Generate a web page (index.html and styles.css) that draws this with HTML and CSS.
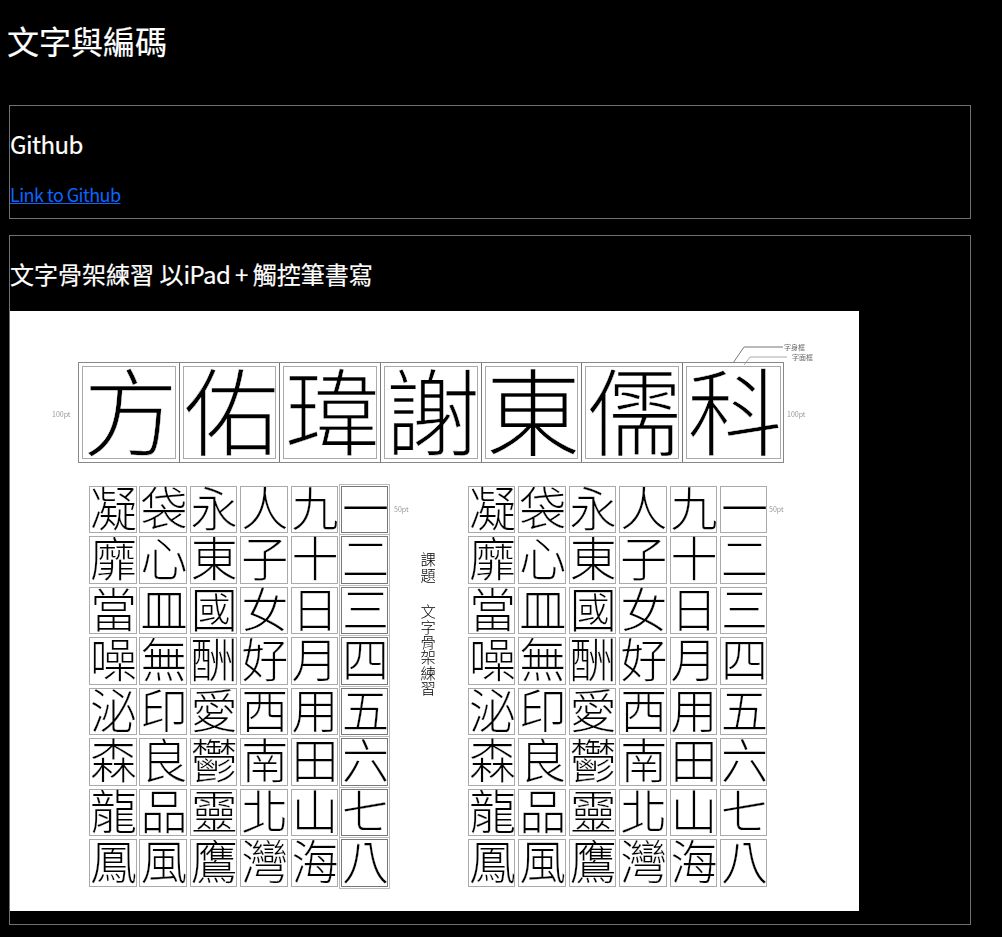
FILE: index.html
```html
<!DOCTYPE html>
<html lang="zh-Hant">
<head>
<meta charset="utf-8">
<title>文字與編碼</title>
<link rel="stylesheet" href="styles.css">
</head>
<body>
<h1 class="title">文字與編碼</h1>
<section class="card card-github">
  <h2 class="card-title"><span class="latin">Github</span></h2>
  <p class="card-text"><a class="link latin" href="#">Link to Github</a></p>
</section>
<section class="card card-sheet">
  <h2 class="card-title">文字骨架練習 以<span class="latin">iPad + </span>觸控筆書寫</h2>
  <div class="sheet">
    <svg class="leaders" width="100" height="30" viewBox="0 0 100 30" aria-hidden="true">
      <path class="leader" d="M0 22 L11 6 H50"/>
      <path class="leader leader-light" d="M11 24 L17 16 H54"/>
    </svg>
    <span class="note note-body">字身框</span>
    <span class="note note-face">字面框</span>
    <span class="size size-a">100pt</span>
    <span class="size size-b">100pt</span>
    <span class="size size-c">50pt</span>
    <span class="size size-d">50pt</span>
    <div class="names">
      <div class="name"><span class="name-inner">方</span></div>
      <div class="name"><span class="name-inner">佑</span></div>
      <div class="name"><span class="name-inner">瑋</span></div>
      <div class="name"><span class="name-inner">謝</span></div>
      <div class="name"><span class="name-inner">東</span></div>
      <div class="name"><span class="name-inner">儒</span></div>
      <div class="name"><span class="name-inner">科</span></div>
    </div>
    <div class="practice">
      <div class="chars chars-left">
        <span class="ch">凝</span><span class="ch">袋</span><span class="ch">永</span><span class="ch">人</span><span class="ch">九</span><span class="ch ch-mark">一</span>
        <span class="ch">靡</span><span class="ch">心</span><span class="ch">東</span><span class="ch">子</span><span class="ch">十</span><span class="ch ch-mark">二</span>
        <span class="ch">當</span><span class="ch">皿</span><span class="ch">國</span><span class="ch">女</span><span class="ch">日</span><span class="ch ch-mark">三</span>
        <span class="ch">噪</span><span class="ch">無</span><span class="ch">酬</span><span class="ch">好</span><span class="ch">月</span><span class="ch ch-mark">四</span>
        <span class="ch">泌</span><span class="ch">印</span><span class="ch">愛</span><span class="ch">西</span><span class="ch">用</span><span class="ch ch-mark">五</span>
        <span class="ch">森</span><span class="ch">良</span><span class="ch">鬱</span><span class="ch">南</span><span class="ch">田</span><span class="ch ch-mark">六</span>
        <span class="ch">龍</span><span class="ch">品</span><span class="ch">靈</span><span class="ch">北</span><span class="ch">山</span><span class="ch ch-mark">七</span>
        <span class="ch">鳳</span><span class="ch">風</span><span class="ch">鷹</span><span class="ch">灣</span><span class="ch">海</span><span class="ch ch-mark">八</span>
      </div>
      <div class="topic"><span>課題</span><span>文字骨架練習</span></div>
      <div class="chars chars-right">
        <span class="ch">凝</span><span class="ch">袋</span><span class="ch">永</span><span class="ch">人</span><span class="ch">九</span><span class="ch">一</span>
        <span class="ch">靡</span><span class="ch">心</span><span class="ch">東</span><span class="ch">子</span><span class="ch">十</span><span class="ch">二</span>
        <span class="ch">當</span><span class="ch">皿</span><span class="ch">國</span><span class="ch">女</span><span class="ch">日</span><span class="ch">三</span>
        <span class="ch">噪</span><span class="ch">無</span><span class="ch">酬</span><span class="ch">好</span><span class="ch">月</span><span class="ch">四</span>
        <span class="ch">泌</span><span class="ch">印</span><span class="ch">愛</span><span class="ch">西</span><span class="ch">用</span><span class="ch">五</span>
        <span class="ch">森</span><span class="ch">良</span><span class="ch">鬱</span><span class="ch">南</span><span class="ch">田</span><span class="ch">六</span>
        <span class="ch">龍</span><span class="ch">品</span><span class="ch">靈</span><span class="ch">北</span><span class="ch">山</span><span class="ch">七</span>
        <span class="ch">鳳</span><span class="ch">風</span><span class="ch">鷹</span><span class="ch">灣</span><span class="ch">海</span><span class="ch">八</span>
      </div>
    </div>
  </div>
</section>
</body>
</html>
```
FILE: styles.css
```css
html { background: #000; }
body {
  margin: 0;
  padding: 0 31px 13px 9px;
  background: #000;
  color: #fff;
  font-family: "Noto Sans CJK TC", "Noto Sans", sans-serif;
}
.title {
  margin: 17px 0 42px -2px;
  font-size: 32px;
  font-weight: 400;
  line-height: 46px;
  -webkit-text-stroke: 0.2px #fff;
}
.card {
  border: 1px solid #707070;
  margin-bottom: 16px;
}
.card-title {
  margin: 20px 0 20px;
  font-size: 24px;
  font-weight: 400;
  line-height: 35px;
  -webkit-text-stroke: 0.2px #fff;
}
.latin { letter-spacing: -0.55px; }
.card-text {
  margin: 0;
  font-size: 18px;
  line-height: 26px;
}
.card-github { height: 112px; }
.card-sheet { height: 688px; margin-bottom: 0; }
.link { color: #0a66ff; }
.sheet {
  position: relative;
  width: 849px;
  height: 600px;
  background: #fff;
  color: #000;
  padding: 51px 0 0 68px;
  box-sizing: border-box;
}
.leaders {
  position: absolute;
  left: 723px;
  top: 30px;
}
.leader { fill: none; stroke: #777; stroke-width: 1; }
.leader-light { stroke: #aaa; }
.note, .size {
  position: absolute;
  font-size: 7px;
  line-height: 8px;
  white-space: nowrap;
  filter: blur(0.3px);
}
.note { color: #666; }
.note-body { left: 774px; top: 32px; }
.note-face { left: 782px; top: 42px; }
.size { color: #999; }
.size-a { left: 42px; top: 99px; }
.size-b { left: 777px; top: 99px; }
.size-c { left: 384px; top: 194px; }
.size-d { left: 759px; top: 194px; }
.names {
  display: grid;
  grid-template-columns: repeat(7, 100.7px);
  width: 706px;
  height: 101px;
  border: 1px solid #888;
  box-sizing: border-box;
  filter: blur(0.3px);
}
.name {
  padding: 3px;
  border-right: 1px solid #777;
  box-sizing: border-box;
  height: 99px;
}
.name:last-child { border-right: 0; }
.name-inner {
  display: block;
  height: 93px;
  border: 1px solid #aaa;
  box-sizing: border-box;
  font-size: 95px;
  line-height: 81px;
  text-align: center;
  font-weight: 300;
  -webkit-text-stroke: 0.4px #fff;
}
.practice {
  display: flex;
  margin: 22.5px 0 0 11px;
}
.chars {
  display: grid;
  grid-template-columns: repeat(6, 47.5px);
  grid-auto-rows: 47.5px;
  column-gap: 2.9px;
  row-gap: 3px;
  filter: blur(0.3px);
}
.ch {
  border: 1px solid #aaa;
  box-sizing: border-box;
  font-size: 47px;
  line-height: 38px;
  text-align: center;
  font-weight: 300;
  -webkit-text-stroke: 0.2px #fff;
}
.ch-mark {
  outline: 1px solid #bbb;
  outline-offset: 1px;
  border-color: #777;
}
.topic {
  writing-mode: vertical-rl;
  display: flex;
  flex-direction: row;
  gap: 22px;
  width: 79.5px;
  height: 160px;
  margin-top: 66px;
  font-size: 15.3px;
  line-height: 16px;
  font-weight: 300;
  align-items: center;
  justify-content: flex-start;
  filter: blur(0.3px);
}
```
